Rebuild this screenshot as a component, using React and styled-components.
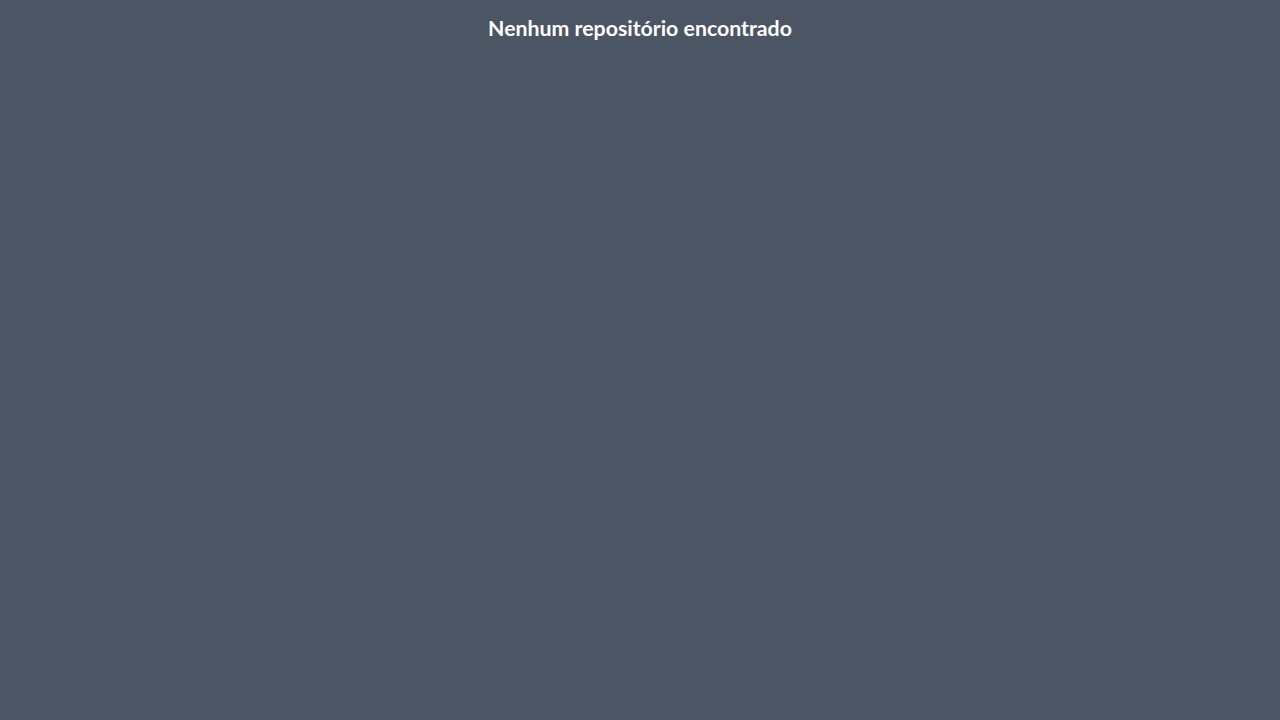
import React from 'react';
import styled, { createGlobalStyle } from 'styled-components';

const GlobalStyle = createGlobalStyle`
  body {
    margin: 0;
    background: #4b5563;
    font-family: Lato, "Open Sans", sans-serif;
  }
`;

const Page = styled.main`
  min-height: 720px;
  background: #4b5563;
  color: #fff;
  padding-top: 13px;
  box-sizing: border-box;
`;

const Empty = styled.h2`
  margin: 0;
  text-align: center;
  font-size: 21.3px;
  font-weight: 700;
  line-height: 30px;
`;

function App() {
  return (
    <Page>
      <GlobalStyle />
      <Empty>Nenhum repositório encontrado</Empty>
    </Page>
  );
}

export default App;
